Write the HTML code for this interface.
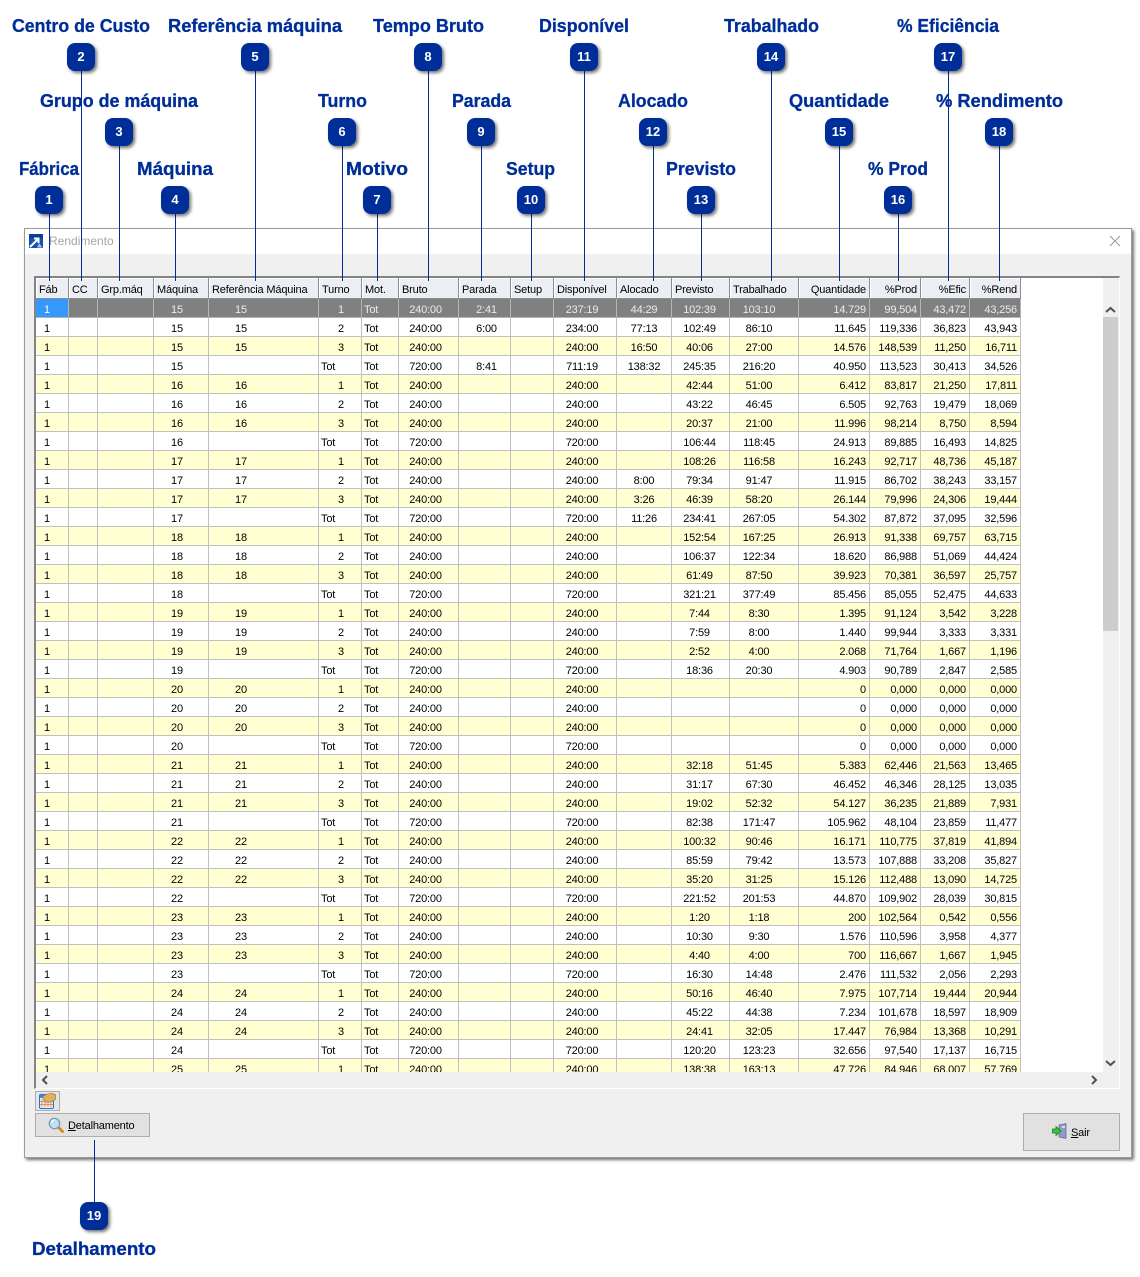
<!DOCTYPE html>
<html lang="pt"><head><meta charset="utf-8"><title>Rendimento</title>
<style>
html,body{margin:0;padding:0;background:#fff}
body{position:relative;width:1140px;height:1277px;overflow:hidden;font-family:"Liberation Sans",sans-serif}
.abs{position:absolute}
#win{left:24px;top:228px;width:1106px;height:928px;background:#f0f0f0;border:1px solid #9a9a9a;box-shadow:2px 2px 3px rgba(0,0,0,.55)}
#bar{left:25px;top:229px;width:1106px;height:25px;background:#fff}
#ttl{left:49px;top:234px;font-size:12px;color:#a6a6a6}
#frame{left:34px;top:276px;width:1083px;height:810px;background:#fff;border-top:2px solid #848484;border-left:2px solid #848484;border-right:1px solid #fff;border-bottom:1px solid #fff}
#clip{left:36px;top:278px;width:1067px;height:794px;overflow:hidden;background:#fff}
table{border-collapse:separate;border-spacing:0;table-layout:fixed;width:985px;font-size:11px;letter-spacing:-.17px;color:#000}
th,td{box-sizing:border-box;white-space:nowrap;overflow:hidden;font-weight:normal}
th{height:21px;padding:4px 0 0 3px;line-height:16px;background:#ebeef2;border-right:1px solid #8e8e8e;border-bottom:1px solid #8e8e8e;box-shadow:inset 1px 1px 0 #fff;text-align:left;vertical-align:top}
td{height:19px;padding:4px 0 0;line-height:14px;border-right:1px solid #c0c0c0;border-bottom:1px solid #c0c0c0;vertical-align:top}
tbody tr:nth-child(odd) td{background:#ffffd2}
tbody tr:nth-child(even) td{background:#fff}
tbody tr.sel td{background:#808080;color:#ececec;border-color:#b4b4b4}
tbody tr.sel td:first-child{background:#3399ff;color:#fff}
td:nth-child(1){padding-left:8px}
td:nth-child(4){padding-left:17px}
td:nth-child(5){padding-left:26px}
td:nth-child(6){padding-left:19px}
td.l{padding-left:2px!important}
td:nth-child(7){padding-left:2px}
td:nth-child(8){text-align:center;padding-right:6px}
td:nth-child(9){text-align:center;padding-left:4px}
td:nth-child(11){text-align:center;padding-right:6px}
td:nth-child(12){text-align:center}
td:nth-child(13){text-align:center;padding-right:2px}
td:nth-child(14){text-align:center;padding-right:10px}
td:nth-child(n+15){text-align:right;padding-right:3px}
th.r{text-align:right;padding:4px 3px 0 0}
#vs{left:1103px;top:278px;width:16px;height:794px;background:#f0f0f0}
#thumb{left:1103px;top:317px;width:15px;height:314px;background:#cdcdcd}
#hs{left:36px;top:1072px;width:1083px;height:16px;background:#f0f0f0}
.btn{background:#e1e1e1;border:1px solid #adadad;box-sizing:border-box;font-size:11px;color:#000}
.b{position:absolute;width:28px;height:28px;border-radius:8px;background:#002e99;box-shadow:2px 2px 3px rgba(0,0,0,.55);color:#fff;font-weight:bold;font-size:13px;line-height:28px;text-align:center}
svg text{font-family:"Liberation Sans",sans-serif;font-weight:bold;font-size:18px;fill:#002e99;stroke:#002e99;stroke-width:.3px}
</style></head><body>
<div class="abs" id="win"></div>
<div class="abs" id="bar"></div>
<svg class="abs" style="left:29px;top:234px" width="14" height="14" viewBox="0 0 14 14"><rect width="14" height="14" fill="#1450b0"/><rect y="0" width="14" height="4" fill="#0b3c96"/><path d="M1 13 L9 5 M5 4.500 H9.500 V9" fill="none" stroke="#fff" stroke-width="2"/><path d="M10 9 L13.500 13.500 H8 Z" fill="#a9bfe0"/></svg>
<div class="abs" id="ttl">Rendimento</div>
<svg class="abs" style="left:1109px;top:235px" width="12" height="12" viewBox="0 0 12 12"><path d="M1 1 L11 11 M11 1 L1 11" stroke="#9a9a9a" stroke-width="1" fill="none"/></svg>
<div class="abs" id="frame"></div>
<div class="abs" id="clip">
<table>
<colgroup><col style="width:33px"><col style="width:29px"><col style="width:56px"><col style="width:55px"><col style="width:110px"><col style="width:43px"><col style="width:37px"><col style="width:60px"><col style="width:52px"><col style="width:43px"><col style="width:63px"><col style="width:55px"><col style="width:58px"><col style="width:69px"><col style="width:71px"><col style="width:51px"><col style="width:49px"><col style="width:51px"></colgroup>
<thead><tr><th>Fáb<th>CC<th>Grp.máq<th>Máquina<th>Referência Máquina<th>Turno<th>Mot.<th>Bruto<th>Parada<th>Setup<th>Disponível<th>Alocado<th>Previsto<th>Trabalhado<th class="r">Quantidade<th class="r">%Prod<th class="r">%Efic<th class="r">%Rend</tr></thead>
<tbody>
<tr class="sel"><td>1<td><td><td>15<td>15<td>1<td>Tot<td>240:00<td>2:41<td><td>237:19<td>44:29<td>102:39<td>103:10<td>14.729<td>99,504<td>43,472<td>43,256
<tr><td>1<td><td><td>15<td>15<td>2<td>Tot<td>240:00<td>6:00<td><td>234:00<td>77:13<td>102:49<td>86:10<td>11.645<td>119,336<td>36,823<td>43,943
<tr><td>1<td><td><td>15<td>15<td>3<td>Tot<td>240:00<td><td><td>240:00<td>16:50<td>40:06<td>27:00<td>14.576<td>148,539<td>11,250<td>16,711
<tr><td>1<td><td><td>15<td><td class="l">Tot<td>Tot<td>720:00<td>8:41<td><td>711:19<td>138:32<td>245:35<td>216:20<td>40.950<td>113,523<td>30,413<td>34,526
<tr><td>1<td><td><td>16<td>16<td>1<td>Tot<td>240:00<td><td><td>240:00<td><td>42:44<td>51:00<td>6.412<td>83,817<td>21,250<td>17,811
<tr><td>1<td><td><td>16<td>16<td>2<td>Tot<td>240:00<td><td><td>240:00<td><td>43:22<td>46:45<td>6.505<td>92,763<td>19,479<td>18,069
<tr><td>1<td><td><td>16<td>16<td>3<td>Tot<td>240:00<td><td><td>240:00<td><td>20:37<td>21:00<td>11.996<td>98,214<td>8,750<td>8,594
<tr><td>1<td><td><td>16<td><td class="l">Tot<td>Tot<td>720:00<td><td><td>720:00<td><td>106:44<td>118:45<td>24.913<td>89,885<td>16,493<td>14,825
<tr><td>1<td><td><td>17<td>17<td>1<td>Tot<td>240:00<td><td><td>240:00<td><td>108:26<td>116:58<td>16.243<td>92,717<td>48,736<td>45,187
<tr><td>1<td><td><td>17<td>17<td>2<td>Tot<td>240:00<td><td><td>240:00<td>8:00<td>79:34<td>91:47<td>11.915<td>86,702<td>38,243<td>33,157
<tr><td>1<td><td><td>17<td>17<td>3<td>Tot<td>240:00<td><td><td>240:00<td>3:26<td>46:39<td>58:20<td>26.144<td>79,996<td>24,306<td>19,444
<tr><td>1<td><td><td>17<td><td class="l">Tot<td>Tot<td>720:00<td><td><td>720:00<td>11:26<td>234:41<td>267:05<td>54.302<td>87,872<td>37,095<td>32,596
<tr><td>1<td><td><td>18<td>18<td>1<td>Tot<td>240:00<td><td><td>240:00<td><td>152:54<td>167:25<td>26.913<td>91,338<td>69,757<td>63,715
<tr><td>1<td><td><td>18<td>18<td>2<td>Tot<td>240:00<td><td><td>240:00<td><td>106:37<td>122:34<td>18.620<td>86,988<td>51,069<td>44,424
<tr><td>1<td><td><td>18<td>18<td>3<td>Tot<td>240:00<td><td><td>240:00<td><td>61:49<td>87:50<td>39.923<td>70,381<td>36,597<td>25,757
<tr><td>1<td><td><td>18<td><td class="l">Tot<td>Tot<td>720:00<td><td><td>720:00<td><td>321:21<td>377:49<td>85.456<td>85,055<td>52,475<td>44,633
<tr><td>1<td><td><td>19<td>19<td>1<td>Tot<td>240:00<td><td><td>240:00<td><td>7:44<td>8:30<td>1.395<td>91,124<td>3,542<td>3,228
<tr><td>1<td><td><td>19<td>19<td>2<td>Tot<td>240:00<td><td><td>240:00<td><td>7:59<td>8:00<td>1.440<td>99,944<td>3,333<td>3,331
<tr><td>1<td><td><td>19<td>19<td>3<td>Tot<td>240:00<td><td><td>240:00<td><td>2:52<td>4:00<td>2.068<td>71,764<td>1,667<td>1,196
<tr><td>1<td><td><td>19<td><td class="l">Tot<td>Tot<td>720:00<td><td><td>720:00<td><td>18:36<td>20:30<td>4.903<td>90,789<td>2,847<td>2,585
<tr><td>1<td><td><td>20<td>20<td>1<td>Tot<td>240:00<td><td><td>240:00<td><td><td><td>0<td>0,000<td>0,000<td>0,000
<tr><td>1<td><td><td>20<td>20<td>2<td>Tot<td>240:00<td><td><td>240:00<td><td><td><td>0<td>0,000<td>0,000<td>0,000
<tr><td>1<td><td><td>20<td>20<td>3<td>Tot<td>240:00<td><td><td>240:00<td><td><td><td>0<td>0,000<td>0,000<td>0,000
<tr><td>1<td><td><td>20<td><td class="l">Tot<td>Tot<td>720:00<td><td><td>720:00<td><td><td><td>0<td>0,000<td>0,000<td>0,000
<tr><td>1<td><td><td>21<td>21<td>1<td>Tot<td>240:00<td><td><td>240:00<td><td>32:18<td>51:45<td>5.383<td>62,446<td>21,563<td>13,465
<tr><td>1<td><td><td>21<td>21<td>2<td>Tot<td>240:00<td><td><td>240:00<td><td>31:17<td>67:30<td>46.452<td>46,346<td>28,125<td>13,035
<tr><td>1<td><td><td>21<td>21<td>3<td>Tot<td>240:00<td><td><td>240:00<td><td>19:02<td>52:32<td>54.127<td>36,235<td>21,889<td>7,931
<tr><td>1<td><td><td>21<td><td class="l">Tot<td>Tot<td>720:00<td><td><td>720:00<td><td>82:38<td>171:47<td>105.962<td>48,104<td>23,859<td>11,477
<tr><td>1<td><td><td>22<td>22<td>1<td>Tot<td>240:00<td><td><td>240:00<td><td>100:32<td>90:46<td>16.171<td>110,775<td>37,819<td>41,894
<tr><td>1<td><td><td>22<td>22<td>2<td>Tot<td>240:00<td><td><td>240:00<td><td>85:59<td>79:42<td>13.573<td>107,888<td>33,208<td>35,827
<tr><td>1<td><td><td>22<td>22<td>3<td>Tot<td>240:00<td><td><td>240:00<td><td>35:20<td>31:25<td>15.126<td>112,488<td>13,090<td>14,725
<tr><td>1<td><td><td>22<td><td class="l">Tot<td>Tot<td>720:00<td><td><td>720:00<td><td>221:52<td>201:53<td>44.870<td>109,902<td>28,039<td>30,815
<tr><td>1<td><td><td>23<td>23<td>1<td>Tot<td>240:00<td><td><td>240:00<td><td>1:20<td>1:18<td>200<td>102,564<td>0,542<td>0,556
<tr><td>1<td><td><td>23<td>23<td>2<td>Tot<td>240:00<td><td><td>240:00<td><td>10:30<td>9:30<td>1.576<td>110,596<td>3,958<td>4,377
<tr><td>1<td><td><td>23<td>23<td>3<td>Tot<td>240:00<td><td><td>240:00<td><td>4:40<td>4:00<td>700<td>116,667<td>1,667<td>1,945
<tr><td>1<td><td><td>23<td><td class="l">Tot<td>Tot<td>720:00<td><td><td>720:00<td><td>16:30<td>14:48<td>2.476<td>111,532<td>2,056<td>2,293
<tr><td>1<td><td><td>24<td>24<td>1<td>Tot<td>240:00<td><td><td>240:00<td><td>50:16<td>46:40<td>7.975<td>107,714<td>19,444<td>20,944
<tr><td>1<td><td><td>24<td>24<td>2<td>Tot<td>240:00<td><td><td>240:00<td><td>45:22<td>44:38<td>7.234<td>101,678<td>18,597<td>18,909
<tr><td>1<td><td><td>24<td>24<td>3<td>Tot<td>240:00<td><td><td>240:00<td><td>24:41<td>32:05<td>17.447<td>76,984<td>13,368<td>10,291
<tr><td>1<td><td><td>24<td><td class="l">Tot<td>Tot<td>720:00<td><td><td>720:00<td><td>120:20<td>123:23<td>32.656<td>97,540<td>17,137<td>16,715
<tr><td>1<td><td><td>25<td>25<td>1<td>Tot<td>240:00<td><td><td>240:00<td><td>138:38<td>163:13<td>47.726<td>84,946<td>68,007<td>57,769
</tbody></table>
</div>
<div class="abs" id="vs"></div>
<div class="abs" id="thumb"></div>
<div class="abs" id="hs"></div>
<svg class="abs" style="left:0;top:0" width="1140" height="1277" viewBox="0 0 1140 1277">
<g fill="none" stroke="#505050" stroke-width="2">
<path d="M1106 312 L1110.500 308 L1115 312"/>
<path d="M1106 1061 L1110.500 1065 L1115 1061"/>
<path d="M47 1076 L43 1080 L47 1084"/>
<path d="M1092 1076 L1096 1080 L1092 1084"/>
</g>
<g stroke="#002e99" stroke-width="1" shape-rendering="crispEdges">
<path d="M49.500 200V281M81.500 57V281M119.500 132V281M175.500 200V281M255.500 57V281M342.500 132V281M377.500 200V281M428.500 57V281M481.500 132V281M531.500 200V281M584.500 57V281M653.500 132V281M701.500 200V281M771.500 57V281M839.500 132V281M898.500 200V281M948.500 57V281M999.500 132V281M94.500 1140V1216"/>
</g>
<text x="12" y="32" textLength="138" lengthAdjust="spacingAndGlyphs">Centro de Custo</text>
<text x="168" y="32" textLength="174" lengthAdjust="spacingAndGlyphs">Referência máquina</text>
<text x="373" y="32" textLength="111" lengthAdjust="spacingAndGlyphs">Tempo Bruto</text>
<text x="539" y="32" textLength="90" lengthAdjust="spacingAndGlyphs">Disponível</text>
<text x="724" y="32" textLength="95" lengthAdjust="spacingAndGlyphs">Trabalhado</text>
<text x="897" y="32" textLength="102" lengthAdjust="spacingAndGlyphs">% Eficiência</text>
<text x="40" y="107" textLength="158" lengthAdjust="spacingAndGlyphs">Grupo de máquina</text>
<text x="318" y="107" textLength="49" lengthAdjust="spacingAndGlyphs">Turno</text>
<text x="452" y="107" textLength="59" lengthAdjust="spacingAndGlyphs">Parada</text>
<text x="618" y="107" textLength="70" lengthAdjust="spacingAndGlyphs">Alocado</text>
<text x="789" y="107" textLength="100" lengthAdjust="spacingAndGlyphs">Quantidade</text>
<text x="936" y="107" textLength="127" lengthAdjust="spacingAndGlyphs">% Rendimento</text>
<text x="19" y="175" textLength="60" lengthAdjust="spacingAndGlyphs">Fábrica</text>
<text x="137" y="175" textLength="76" lengthAdjust="spacingAndGlyphs">Máquina</text>
<text x="346" y="175" textLength="62" lengthAdjust="spacingAndGlyphs">Motivo</text>
<text x="506" y="175" textLength="49" lengthAdjust="spacingAndGlyphs">Setup</text>
<text x="666" y="175" textLength="70" lengthAdjust="spacingAndGlyphs">Previsto</text>
<text x="868" y="175" textLength="60" lengthAdjust="spacingAndGlyphs">% Prod</text>
<text x="32" y="1255" textLength="124" lengthAdjust="spacingAndGlyphs">Detalhamento</text>
</svg>
<div class="b" style="left:35px;top:186px">1</div>
<div class="b" style="left:67px;top:43px">2</div>
<div class="b" style="left:105px;top:118px">3</div>
<div class="b" style="left:161px;top:186px">4</div>
<div class="b" style="left:241px;top:43px">5</div>
<div class="b" style="left:328px;top:118px">6</div>
<div class="b" style="left:363px;top:186px">7</div>
<div class="b" style="left:414px;top:43px">8</div>
<div class="b" style="left:467px;top:118px">9</div>
<div class="b" style="left:517px;top:186px">10</div>
<div class="b" style="left:570px;top:43px">11</div>
<div class="b" style="left:639px;top:118px">12</div>
<div class="b" style="left:687px;top:186px">13</div>
<div class="b" style="left:757px;top:43px">14</div>
<div class="b" style="left:825px;top:118px">15</div>
<div class="b" style="left:884px;top:186px">16</div>
<div class="b" style="left:934px;top:43px">17</div>
<div class="b" style="left:985px;top:118px">18</div>
<div class="b" style="left:80px;top:1202px">19</div>
<div class="abs btn" style="left:35px;top:1091px;width:25px;height:20px;background:#e6e6e6"></div>
<svg class="abs" style="left:39px;top:1093px" width="17" height="16" viewBox="0 0 17 16"><rect x="0.500" y="1.500" width="14" height="14" rx="1.500" fill="#e8f2fb" stroke="#1478d0"/><rect x="1" y="2" width="13" height="3" fill="#2a8fe8"/><path d="M3 6v8M6 6v8M9 6v8M12 6v8M1 8.500h13M1 11.500h13" stroke="#f08a50" stroke-width="1"/><path d="M4 3.500 Q8 0 13 0.500 L16.500 1.500 V6.500 L12 9 H7 Q4 7 4 3.500Z" fill="#e0b060" stroke="#a87830" stroke-width=".7"/></svg>
<div class="abs btn" style="left:35px;top:1113px;width:115px;height:24px"></div>
<svg class="abs" style="left:48px;top:1117px" width="16" height="16" viewBox="0 0 16 16"><path d="M9.500 9.500 L14.500 14.500" stroke="#d88a2a" stroke-width="3" stroke-linecap="round"/><circle cx="6.500" cy="6.500" r="5.200" fill="#bcdff5" stroke="#7d96aa" stroke-width="1.200"/><path d="M3.500 6 Q4 3.500 6.500 3" stroke="#fff" fill="none" stroke-width="1.200"/></svg>
<div class="abs" style="left:68px;top:1120px;font-size:11px;letter-spacing:-.17px;line-height:13px;color:#000"><u>D</u>etalhamento</div>
<div class="abs btn" style="left:1023px;top:1113px;width:97px;height:38px"></div>
<svg class="abs" style="left:1052px;top:1123px" width="16" height="16" viewBox="0 0 16 16"><path d="M7 2 L14 0.500 V15.500 L7 14 Z" fill="#8f9bc8" stroke="#5a6690" stroke-width=".7"/><rect x="10" y="3" width="3" height="2" fill="#d8dcf0"/><path d="M0.500 6 H4 V3.500 L9 8 L4 12.500 V10 H0.500 Z" fill="#3fc03f" stroke="#1d801d" stroke-width=".8"/></svg>
<div class="abs" style="left:1071px;top:1127px;font-size:11px;letter-spacing:-.17px;line-height:13px;color:#000"><u>S</u>air</div>
</body></html>
